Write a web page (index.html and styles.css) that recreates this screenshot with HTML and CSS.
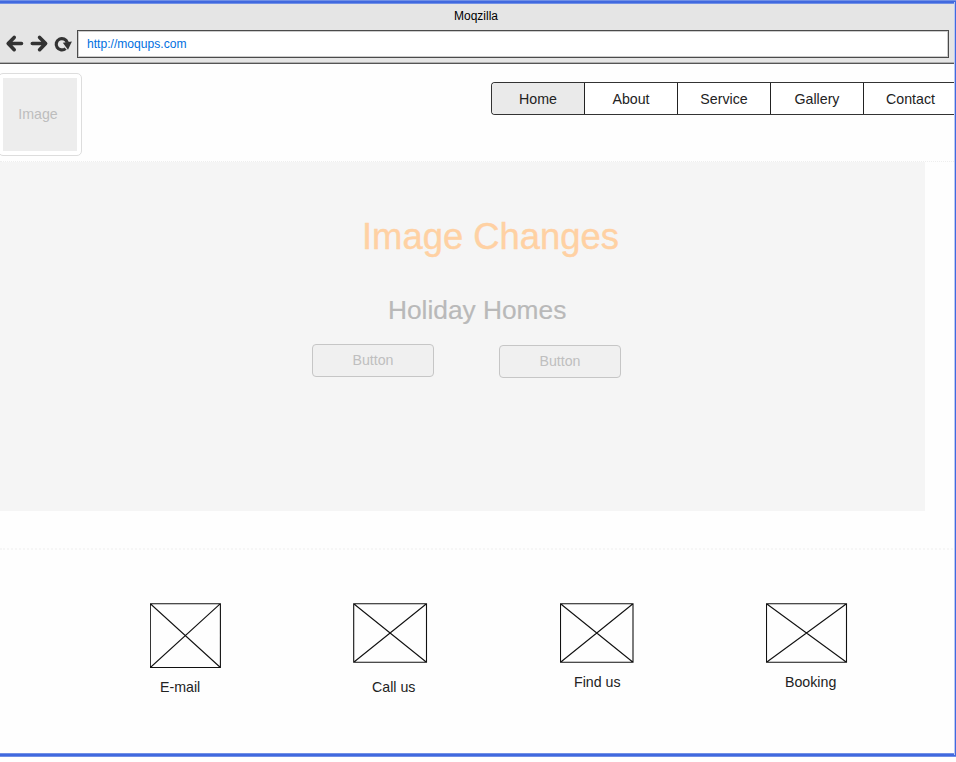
FILE: index.html
```html
<!DOCTYPE html>
<html lang="en">
<head>
<meta charset="utf-8">
<title>Moqzilla</title>
<link rel="stylesheet" href="styles.css">
</head>
<body>
<div class="window">
  <header class="chrome">
    <div class="title">Moqzilla</div>
    <div class="toolbar">
      <svg class="controls" width="77" height="28" viewBox="0 0 77 28" fill="none" stroke="#333" stroke-width="3.6" stroke-linecap="round" stroke-linejoin="round">
        <path d="M14.2 7.4 8.2 13.5l6 6.2M8.8 13.5H21.5M39.6 7.4l6 6.1-6 6.2M45 13.5H32.3"/>
        <path stroke-width="3.2" stroke-linecap="butt" d="M65.6 18.6A5.7 5.7 0 1 1 67.3 12.4"/>
        <path fill="#333" stroke="none" d="M62.8 12.8 71.9 11.4 68 19.8Z"/>
      </svg>
      <div class="address">http://moqups.com</div>
    </div>
  </header>
  <div class="masthead">
    <div class="logo"><div class="logo-fill">Image</div></div>
    <nav class="menu">
      <a class="tab active">Home</a>
      <a class="tab">About</a>
      <a class="tab">Service</a>
      <a class="tab">Gallery</a>
      <a class="tab">Contact</a>
    </nav>
  </div>
  <section class="hero">
    <h1>Image Changes</h1>
    <h2>Holiday Homes</h2>
    <div class="actions">
      <button>Button</button>
      <button class="second">Button</button>
    </div>
  </section>
  <section class="links">
    <div class="card email">
      <svg width="72" height="66" viewBox="0 0 72 66"><path d="M.3.7H70.4V64.5H.3ZL70.4 64.5M70.4.7.3 64.5"/></svg>
      <span>E-mail</span>
    </div>
    <div class="card call">
      <svg width="75" height="61" viewBox="0 0 75 61"><path d="M.7.7H73.5V59.3H.7ZL73.5 59.3M73.5.7.7 59.3"/></svg>
      <span>Call us</span>
    </div>
    <div class="card find">
      <svg width="75" height="61" viewBox="0 0 75 61"><path d="M.5.7H73V59.3H.5ZL73 59.3M73 .7.5 59.3"/></svg>
      <span>Find us</span>
    </div>
    <div class="card booking">
      <svg width="82" height="61" viewBox="0 0 82 61"><path d="M.5.7H80.5V59.3H.5ZL80.5 59.3M80.5.7.5 59.3"/></svg>
      <span>Booking</span>
    </div>
  </section>
</div>
</body>
</html>
```
FILE: styles.css
```css
* {
  box-sizing: border-box;
}

body {
  margin: 0;
  background: #fff;
  font-family: "Liberation Sans", Arial, sans-serif;
  font-size: 14.2px;
  color: #222;
}

.window {
  position: relative;
  display: flex;
  flex-direction: column;
  height: 757px;
  padding: 4px 0;
  overflow: hidden;
  background:
    linear-gradient(#7190e6 1px, #4169df 1px 3px, #7190e6 3px) top / 100% 4px no-repeat,
    linear-gradient(#7190e6 1px, #4169df 1px 3px, #7190e6 3px) bottom / 100% 4px no-repeat,
    #fefefe;
}

.window::after {
  content: "";
  position: absolute;
  top: 2px;
  right: 0;
  bottom: 2px;
  width: 1px;
  background: #4169df;
  border-left: 1px solid #b9c8f1;
}

.chrome {
  flex: none;
  height: 60px;
  background: #e5e5e5;
  border-bottom: 1px solid #555;
  box-shadow: inset 0 -1px #b0b0b0;
}

.title {
  height: 26px;
  padding-right: 4px;
  font-size: 12px;
  line-height: 24px;
  text-align: center;
  color: #000;
}

.toolbar {
  display: flex;
  height: 28px;
  padding-right: 7px;
}

.controls {
  flex: none;
}

.address {
  flex: 1;
  padding-left: 9px;
  background: #fff;
  border: 1px solid #4a4a4a;
  box-shadow: inset 0 0 0 1px #ccc;
  font-size: 12.1px;
  line-height: 26px;
  color: #0070e0;
}

.masthead {
  flex: none;
  display: flex;
  justify-content: space-between;
  align-items: flex-start;
  height: 98px;
  border-bottom: 1px dotted #eee;
}

.logo {
  width: 84px;
  height: 83px;
  margin: 9px 0 0 -2px;
  padding: 4px;
  background: #fff;
  border: 1px solid #ddd;
  border-radius: 5px;
}

.logo-fill {
  height: 73px;
  padding-right: 4px;
  background: #ededed;
  line-height: 72px;
  text-align: center;
  color: #bdbdbd;
}

.menu {
  display: flex;
  height: 33px;
  margin: 18px -1px 0 0;
  border: 1px solid #333;
  border-right: 0;
  border-radius: 4px 0 0 4px;
  overflow: hidden;
}

.tab {
  width: 93px;
  border-right: 1px solid #222;
  background: #fff;
  line-height: 32px;
  text-align: center;
}

.tab:last-child {
  border: 0;
}

.active {
  background: #eaeaea;
}

.hero {
  flex: none;
  width: 925px;
  height: 349px;
  background: #f5f5f5;
}

h1,
h2 {
  margin: 0;
  font-weight: 400;
  white-space: nowrap;
}

h1 {
  padding: 54px 0 0 362px;
  font-size: 36.4px;
  line-height: 42px;
  color: #ffd1a3;
  -webkit-text-stroke: 0.4px #ffd1a3;
}

h2 {
  padding: 37px 0 0 388px;
  font-size: 26.3px;
  line-height: 30px;
  color: #b9b9b9;
  -webkit-text-stroke: 0.2px #b9b9b9;
}

.actions {
  display: flex;
  gap: 65px;
  padding: 19px 0 0 312px;
}

button {
  width: 122px;
  height: 33px;
  padding: 0 0 1px;
  background: #f0f0f0;
  border: 1px solid #c6c6c6;
  border-radius: 4px;
  font: inherit;
  color: #bfbfbf;
}

.second {
  margin-top: 1px;
}

.links {
  flex: 1;
  display: flex;
  align-items: flex-start;
  margin-top: 37px;
  padding: 53px 0 0 150px;
  border-top: 2px dotted #f6f6f6;
}

.card {
  display: flex;
  flex-direction: column;
  gap: 10px;
  width: 203px;
  line-height: 16px;
}

.card path {
  fill: none;
  stroke: #111;
  stroke-width: 1.1;
}

.card span {
  white-space: nowrap;
}

.email span {
  padding-left: 10px;
}

.call {
  width: 207px;
  gap: 15px;
}

.call span {
  padding-left: 19px;
}

.find {
  width: 206px;
}

.find span {
  padding-left: 14px;
}

.booking {
  width: 82px;
}

.booking span {
  padding-left: 19px;
}
```
